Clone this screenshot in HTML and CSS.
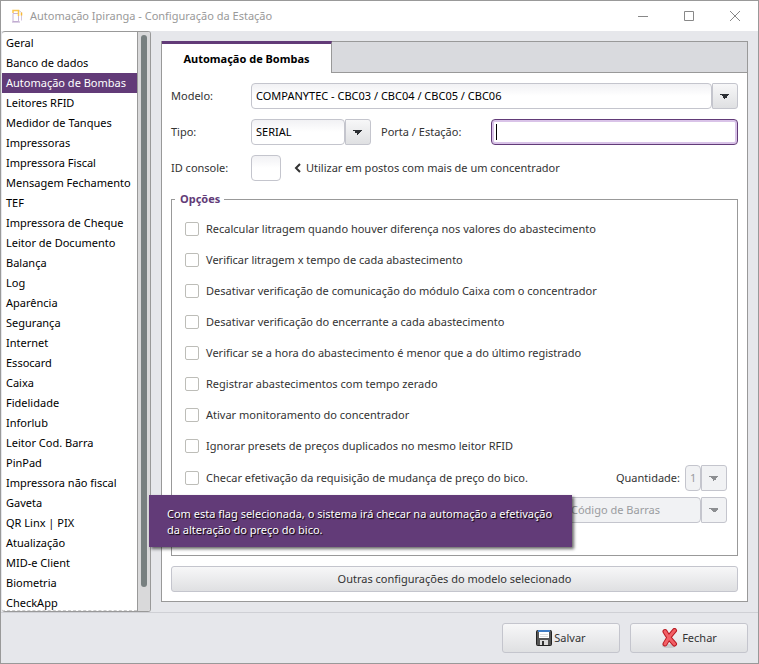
FILE: index.html
```
<!DOCTYPE html>
<html lang="pt-BR">

<head>
  <meta charset="UTF-8" />
  <title>Automação Ipiranga - Configuração da Estação</title>
  <link rel="stylesheet" href="styles.css">
</head>

<body>
  <div class="window">
    <header class="titlebar">
      <svg class="app-icon" width="12" height="14" viewBox="0 0 12 14" fill="none">
        <path d="M1 4.500h5.500v8h-5.500z" stroke="#c9b6d8" />
        <path d="M0 13h8" stroke="#b9a3cb" />
        <path d="M1 4V1.500h5.500V7" stroke="#fbc64e" stroke-width="1.500" />
        <path d="M7 1.500l2.500 2v8" stroke="#d2c3de" />
        <path d="M9.500 3.500v3" stroke="#f9b934" stroke-width="1.500" />
      </svg>
      <span class="title">Automação Ipiranga - Configuração da Estação</span>
      <div class="window-controls">
        <button type="button" aria-label="Minimizar">
          <svg width="12" height="12" viewBox="0 0 12 12"><path d="M1 6.500h10" /></svg>
        </button>
        <button type="button" aria-label="Maximizar">
          <svg width="12" height="12" viewBox="0 0 12 12"><path d="M1.500 1.500h9v9h-9z" /></svg>
        </button>
        <button type="button" aria-label="Fechar janela">
          <svg width="12" height="12" viewBox="0 0 12 12"><path d="M1 1l10 10M11 1L1 11" /></svg>
        </button>
      </div>
    </header>

    <div class="content">
      <nav class="sidebar">
        <ul class="menu">
          <li><a href="#">Geral</a></li>
          <li><a href="#">Banco de dados</a></li>
          <li><a href="#" class="active">Automação de Bombas</a></li>
          <li><a href="#">Leitores RFID</a></li>
          <li><a href="#">Medidor de Tanques</a></li>
          <li><a href="#">Impressoras</a></li>
          <li><a href="#">Impressora Fiscal</a></li>
          <li><a href="#">Mensagem Fechamento</a></li>
          <li><a href="#">TEF</a></li>
          <li><a href="#">Impressora de Cheque</a></li>
          <li><a href="#">Leitor de Documento</a></li>
          <li><a href="#">Balança</a></li>
          <li><a href="#">Log</a></li>
          <li><a href="#">Aparência</a></li>
          <li><a href="#">Segurança</a></li>
          <li><a href="#">Internet</a></li>
          <li><a href="#">Essocard</a></li>
          <li><a href="#">Caixa</a></li>
          <li><a href="#">Fidelidade</a></li>
          <li><a href="#">Inforlub</a></li>
          <li><a href="#">Leitor Cod. Barra</a></li>
          <li><a href="#">PinPad</a></li>
          <li><a href="#">Impressora não fiscal</a></li>
          <li><a href="#">Gaveta</a></li>
          <li><a href="#">QR Linx | PIX</a></li>
          <li><a href="#">Atualização</a></li>
          <li><a href="#">MID-e Client</a></li>
          <li><a href="#">Biometria</a></li>
          <li><a href="#">CheckApp</a></li>
        </ul>
        <div class="scroll-track">
          <div class="scroll-thumb"></div>
        </div>
      </nav>

      <main class="panel">
        <div class="tabs">
          <button type="button" class="tab">Automação de Bombas</button>
        </div>

        <form class="panel-body">
          <div class="row">
            <label class="field-label" for="modelo">Modelo:</label>
            <span class="combo combo-grow">
              <select id="modelo">
                <option>COMPANYTEC - CBC03 / CBC04 / CBC05 / CBC06</option>
              </select>
            </span>
          </div>

          <div class="row">
            <label class="field-label" for="tipo">Tipo:</label>
            <span class="combo combo-tipo">
              <select id="tipo">
                <option>SERIAL</option>
              </select>
            </span>
            <label class="porta-label" for="porta">Porta / Estação:</label>
            <div class="porta-box"><input type="text" id="porta"><span class="caret"></span></div>
          </div>

          <div class="row">
            <label class="field-label" for="console">ID console:</label>
            <input type="text" id="console" class="console">
            <svg class="chevron" width="7" height="10" viewBox="0 0 7 10"><path d="M6 1L2 5l4 4" /></svg>
            <span>Utilizar em postos com mais de um concentrador</span>
          </div>

          <fieldset class="options">
            <legend>Opções</legend>
            <label class="option"><input type="checkbox">Recalcular litragem quando houver diferença nos valores do abastecimento</label>
            <label class="option"><input type="checkbox">Verificar litragem x tempo de cada abastecimento</label>
            <label class="option"><input type="checkbox">Desativar verificação de comunicação do módulo Caixa com o concentrador</label>
            <label class="option"><input type="checkbox">Desativar verificação do encerrante a cada abastecimento</label>
            <label class="option"><input type="checkbox">Verificar se a hora do abastecimento é menor que a do último registrado</label>
            <label class="option"><input type="checkbox">Registrar abastecimentos com tempo zerado</label>
            <label class="option"><input type="checkbox">Ativar monitoramento do concentrador</label>
            <label class="option"><input type="checkbox">Ignorar presets de preços duplicados no mesmo leitor RFID</label>
            <div class="option-line">
              <label class="option"><input type="checkbox">Checar efetivação da requisição de mudança de preço do bico.</label>
              <label class="quantity-label" for="quantidade">Quantidade:</label>
              <span class="combo combo-quantity disabled">
                <select id="quantidade" disabled>
                  <option>1</option>
                </select>
              </span>
              <div class="tooltip" role="tooltip">Com esta flag selecionada, o sistema irá checar na automação a efetivação<br>da alteração do preço do bico.</div>
            </div>
            <div class="option-line last">
              <span class="combo combo-code disabled">
                <select disabled aria-label="Tipo de código">
                  <option>Código de Barras</option>
                </select>
              </span>
            </div>
          </fieldset>

          <button type="button" class="btn">Outras configurações do modelo selecionado</button>
        </form>
      </main>
    </div>

    <footer>
      <button type="button" class="btn btn-action">
        <svg width="16" height="16" viewBox="0 0 16 16">
          <rect x="0.500" y="0.500" width="15" height="15" rx="1" fill="#555" stroke="#222" />
          <rect x="3" y="1" width="10" height="7" fill="#fff" />
          <rect x="2" y="0" width="12" height="2" fill="#3f7cc4" />
          <path d="M4 4.500h8M4 6.500h8" stroke="#ddd" />
          <rect x="4" y="10" width="8" height="5" fill="#dcdcdc" />
          <rect x="6" y="11" width="2" height="4" fill="#333" />
        </svg>
        Salvar
      </button>
      <button type="button" class="btn btn-action btn-close">
        <svg width="18" height="20" viewBox="0 0 18 20">
          <ellipse cx="8" cy="18" rx="7" ry="2" fill="#c9cacc" />
          <path d="M4 3.500Q7 9 13.500 16M13.500 2.500Q8 8 4 16" fill="none" stroke="#b81a22" stroke-width="5" stroke-linecap="round" />
          <path d="M4 3.500Q7 9 13.500 16M13.500 2.500Q8 8 4 16" fill="none" stroke="#f26066" stroke-width="3" stroke-linecap="round" />
        </svg>
        Fechar
      </button>
    </footer>
  </div>
</body>

</html>
```

FILE: styles.css
```
* {
  box-sizing: border-box;
}

body {
  margin: 0;
  font-family: "Noto Sans", sans-serif;
  font-size: 11px;
  line-height: 16px;
  color: #333;
}

button,
input,
select {
  font: inherit;
  color: inherit;
  margin: 0;
}

.window {
  display: flex;
  flex-direction: column;
  height: 100vh;
  background: #e6e7eb;
  border: 1px solid #999;
}

/* barra de título */
.titlebar {
  display: flex;
  align-items: center;
  flex-shrink: 0;
  height: 30px;
  padding-left: 11px;
  background: white;
  color: #999;
}

.app-icon {
  margin-right: 6px;
}

.window-controls {
  display: flex;
  margin-left: auto;
}

.window-controls button {
  display: flex;
  align-items: center;
  justify-content: center;
  width: 46px;
  height: 28px;
  padding: 0;
  border: none;
  background: none;
}

.window-controls path {
  fill: none;
  stroke: #888;
}

.content {
  display: flex;
  flex: 1;
  min-height: 0;
}

/* menu lateral */
.sidebar {
  display: flex;
  flex-shrink: 0;
  width: 149px;
  margin-left: 1px;
  overflow: hidden;
  background: white;
  border-top: 1px solid #999;
  border-right: 1px solid #999;
  border-bottom: 1px solid #999;
  border-radius: 3px;
}

.menu {
  flex: 1;
  min-width: 0;
  overflow: hidden;
  list-style: none;
  margin: 0;
  padding: 1px 0 0;
  border-bottom: 1px dashed #ccc;
  color: black;
}

.menu a {
  display: block;
  height: 20px;
  padding: 2px 0 2px 4px;
  color: inherit;
  text-decoration: none;
  white-space: nowrap;
}

.menu a.active {
  background: #623b78;
  color: white;
}

.scroll-track {
  flex-shrink: 0;
  width: 13px;
  padding: 3px 3px 24px;
  background: #d9d9da;
  border-left: 1px solid #999;
}

.scroll-thumb {
  width: 6px;
  height: 100%;
  background: #788080;
  border-radius: 3px;
}

/* painel principal */
.panel {
  display: flex;
  flex-direction: column;
  flex: 1;
  min-width: 0;
  margin: 10px;
  background: white;
  border: 1px solid #999;
  border-top: none;
}

.tabs {
  display: flex;
  flex-shrink: 0;
  height: 32px;
  background: linear-gradient(#999, #999) bottom / 100% 1px no-repeat #d9dade;
  border-top: 1px solid #999;
}

.tab {
  width: 170px;
  margin-top: -1px;
  padding: 0;
  border: none;
  border-top: 3px solid #623b78;
  border-right: 1px solid #999;
  background: white;
  color: black;
  font-weight: bold;
}

.panel-body {
  display: flex;
  flex-direction: column;
  flex: 1;
  gap: 10px;
  padding: 10px 9px 9px;
}

.row {
  display: flex;
  align-items: center;
  height: 26px;
}

.field-label {
  width: 80px;
}

.combo {
  display: grid;
  grid-template-columns: 1fr 26px;
  height: 26px;
}

.combo::before,
.combo::after {
  content: "";
  grid-row: 1;
  border: 1px solid #c4c5cd;
}

.combo::before {
  grid-column: 1;
  border-radius: 4px;
  background: linear-gradient(#f1f1f4, white 50%);
}

.combo::after {
  grid-column: 2;
  border-radius: 1px 3px 3px 1px;
  background: linear-gradient(to top right, transparent 50%, #2b2e33 50%) 7px 10px / 5px 5px no-repeat, linear-gradient(to top left, transparent 50%, #2b2e33 50%) 12px 10px / 5px 5px no-repeat, linear-gradient(#f7f7f8, #dfe0e2);
}

.combo select {
  grid-row: 1;
  grid-column: 1 / 3;
  z-index: 1;
  width: 100%;
  padding: 0 26px 0 5px;
  border: none;
  outline: none;
  appearance: none;
  background: transparent;
  color: black;
}

.combo.disabled::before {
  background: #f1f2f4;
}

.combo.disabled::after {
  background: linear-gradient(to top right, transparent 50%, #8c8e91 50%) 7px 10px / 5px 5px no-repeat, linear-gradient(to top left, transparent 50%, #8c8e91 50%) 12px 10px / 5px 5px no-repeat, #f1f2f4;
}

.combo.disabled select {
  color: #9a9ca0;
  opacity: 1;
}

.combo-grow {
  flex: 1;
}

.combo-tipo {
  width: 120px;
}

.combo-quantity {
  width: 42px;
}

.combo-code {
  width: 161px;
}

.porta-label {
  flex-shrink: 0;
  width: 110px;
  margin-left: 10px;
}

.porta-box {
  position: relative;
  flex: 1;
  height: 26px;
}

.porta-box input {
  display: block;
  width: 100%;
  height: 26px;
  padding: 0 4px;
  border: 1px solid #623b78;
  border-radius: 4px;
  outline: none;
  box-shadow: inset 0 0 0 2px #d9c3e8;
}

.caret {
  position: absolute;
  left: 5px;
  top: 5px;
  width: 1px;
  height: 16px;
  background: black;
}

.console {
  width: 30px;
  height: 26px;
  padding: 0 4px;
  border: 1px solid #c4c5cd;
  border-radius: 4px;
  background: linear-gradient(#f1f1f4, white 50%);
}

.chevron {
  margin: 0 5px 0 13px;
}

.chevron path {
  fill: none;
  stroke: #333;
  stroke-width: 2;
}

.options {
  flex: 1;
  min-width: 0;
  margin: 0;
  padding: 6px 10px 0 13px;
  border: 1px solid #999;
}

.options legend {
  margin-left: -10px;
  padding: 0 4px 0 5px;
  color: #623b78;
  font-weight: bold;
}

.option {
  display: flex;
  align-items: center;
  height: 31px;
  white-space: nowrap;
}

.option input {
  width: 14px;
  height: 14px;
  margin-right: 7px;
  appearance: none;
  background: white;
  border: 1px solid #bdbdb8;
  border-radius: 2px;
}

.option-line {
  position: relative;
  display: flex;
  align-items: center;
  height: 32px;
  padding-top: 2px;
}

.last {
  justify-content: flex-end;
}

.quantity-label {
  margin-left: auto;
  margin-right: 5px;
}

.tooltip {
  position: absolute;
  left: -36px;
  top: 34px;
  z-index: 10;
  padding: 11px 20px 9px 18px;
  background: #623b78;
  color: white;
  box-shadow: 2px 2px 3px rgba(0, 0, 0, 0.6);
  text-shadow: 1px 1px 1px black;
  white-space: nowrap;
}

.btn {
  display: flex;
  align-items: center;
  justify-content: center;
  gap: 2px;
  height: 26px;
  padding: 0;
  border: 1px solid #c4c5cd;
  border-radius: 3px;
  background: linear-gradient(#f7f7f8, #dfe0e2);
}

footer {
  display: flex;
  justify-content: flex-end;
  align-items: center;
  flex-shrink: 0;
  gap: 10px;
  height: 51px;
  padding-right: 10px;
  border-top: 1px solid #cfd0d5;
}

.btn-action {
  width: 118px;
  height: 30px;
}

.btn-close {
  gap: 3px;
}
```
